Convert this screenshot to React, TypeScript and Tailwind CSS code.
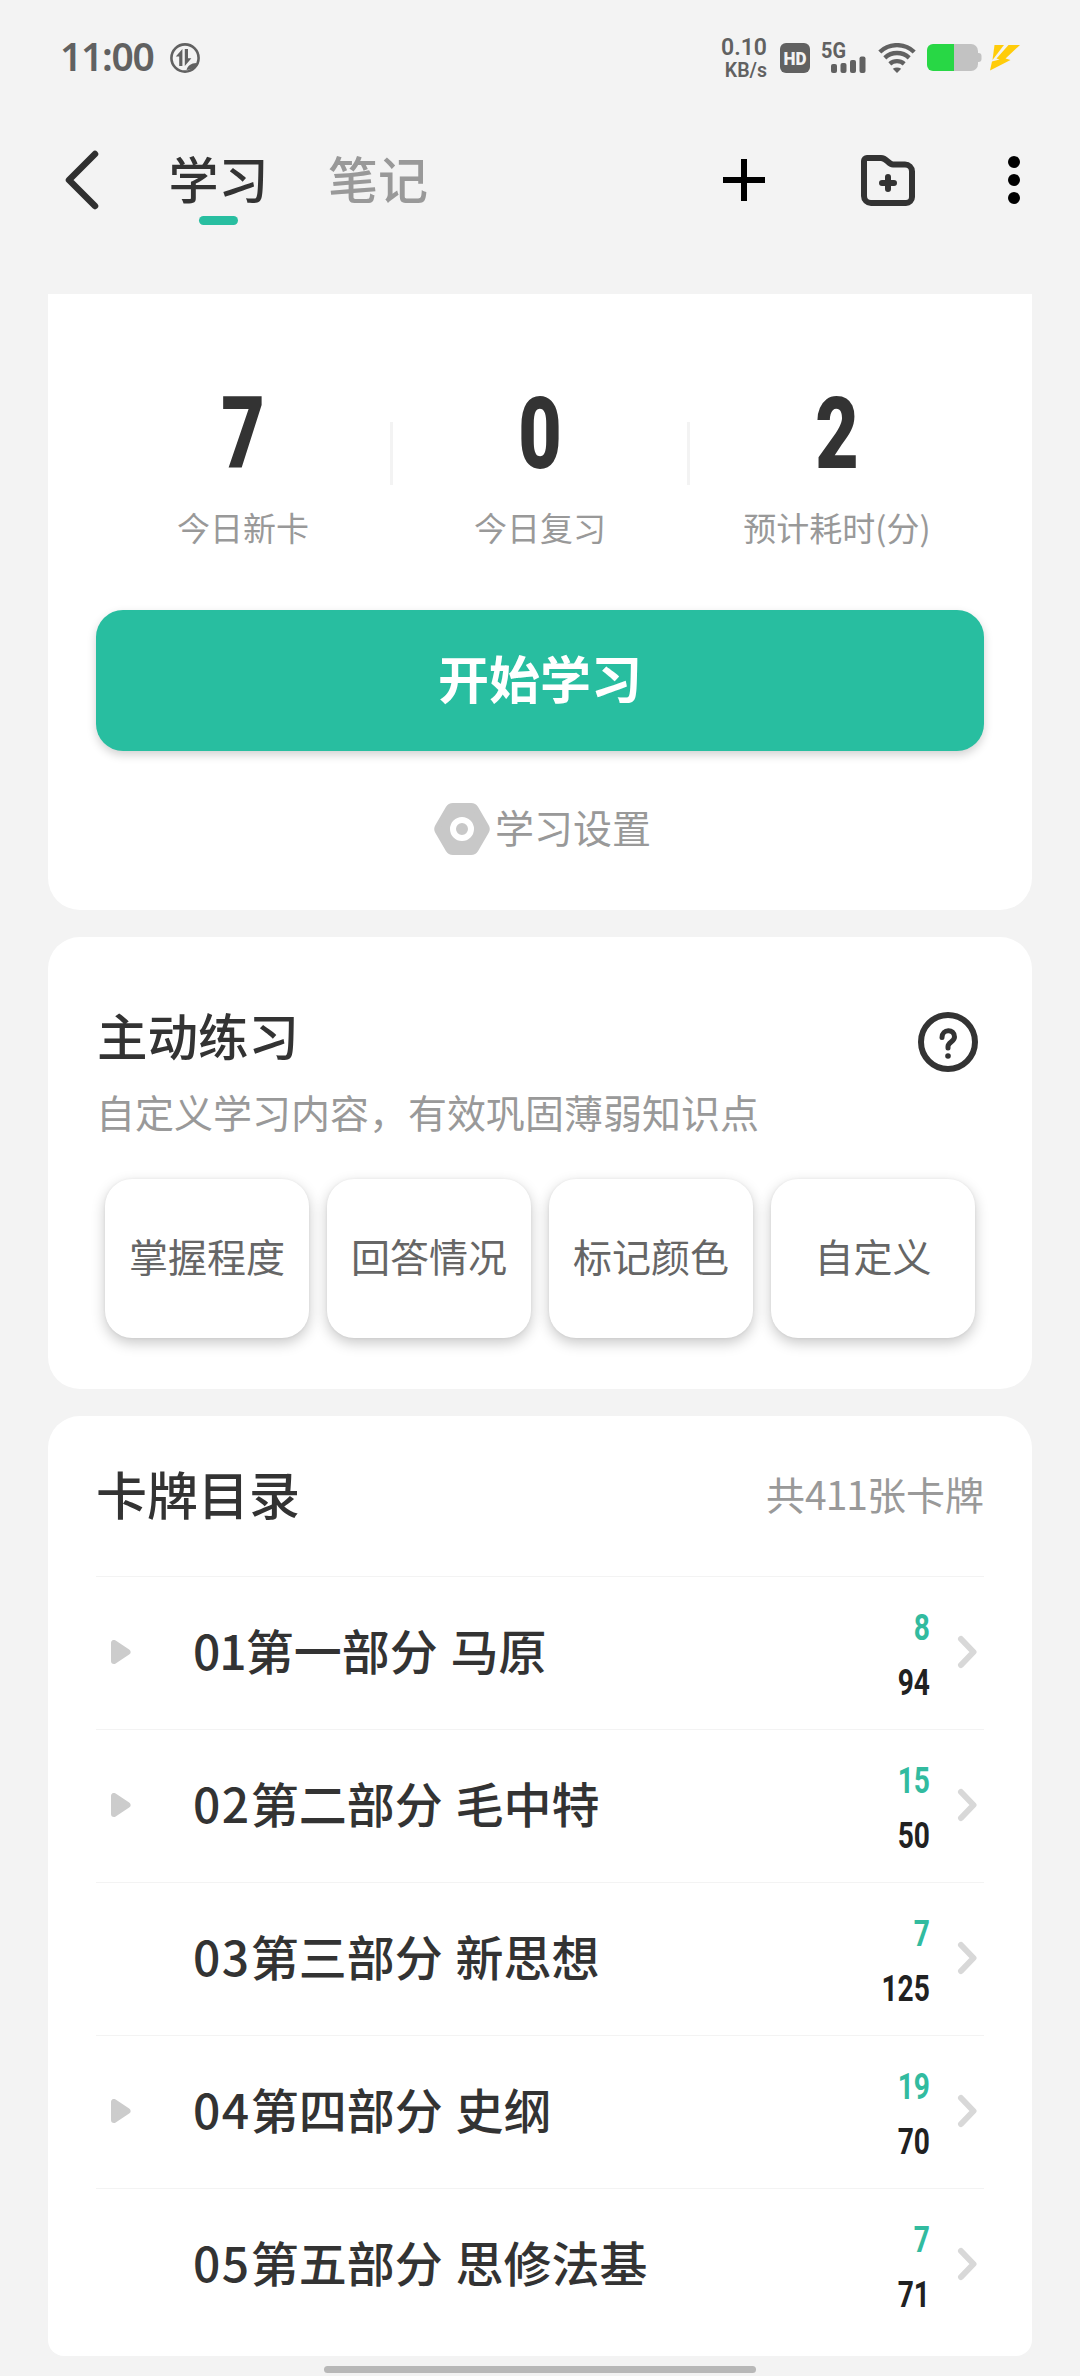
import { Fragment } from "react";

const STATS = [
  { value: "7", label: "今日新卡" },
  { value: "0", label: "今日复习" },
  { value: "2", label: "预计耗时(分)" },
];

const PRACTICE = ["掌握程度", "回答情况", "标记颜色", "自定义"];

const CHAPTERS = [
  { no: "01", title: "第一部分 马原", fresh: 8, total: 94, expandable: true },
  { no: "02", title: "第二部分 毛中特", fresh: 15, total: 50, expandable: true },
  { no: "03", title: "第三部分 新思想", fresh: 7, total: 125, expandable: false },
  { no: "04", title: "第四部分 史纲", fresh: 19, total: 70, expandable: true },
  { no: "05", title: "第五部分 思修法基", fresh: 7, total: 71, expandable: false },
];

function StatusBar() {
  return (
    <div className="flex h-[116px] shrink-0 items-center pl-[60px] pr-[60px] text-[#616161]">
      <span className="w-[96px] pb-[6px] font-['Noto_Sans'] text-[39px] font-semibold leading-none tracking-[-1.3px]">11:00</span>
      <svg className="ml-[14px] h-[30px] w-[30px]" viewBox="0 0 30 30" fill="none">
        <circle cx="15" cy="15" r="13.6" stroke="currentColor" strokeWidth="2.6" />
        <path d="M12.4 6v17H9.2V13.4H5.8zM14.8 6H18v9.3h3.4L14.8 23z" fill="currentColor" />
        <path d="M16.5 27c1-4 4.5-7 10-7-1 4-4.5 7-10 7z" fill="currentColor" />
      </svg>

      <div className="ml-auto flex items-center">
        <div className="flex w-[48px] flex-col items-end font-['Roboto'] font-semibold">
          <span className="text-[23px] leading-[25px]">0.10</span>
          <span className="text-[19.5px] leading-[22px]">KB/s</span>
        </div>
        <svg className="ml-[13px] h-[30px] w-[30px]" viewBox="0 0 30 30">
          <rect width="30" height="30" rx="6" fill="currentColor" />
          <text x="3.5" y="21.7" textLength="23" lengthAdjust="spacingAndGlyphs" fontSize="19" fontWeight="900" fontFamily="Roboto" fill="#f3f3f3">HD</text>
        </svg>
        <svg className="ml-[11px] h-[40px] w-[46px]" viewBox="0 -5 46 40">
          <text x="0" y="15" textLength="25" lengthAdjust="spacingAndGlyphs" fontSize="22" fontWeight="700" fontFamily="Roboto" fill="currentColor">5G</text>
          <rect x="10" y="21" width="6" height="9" rx="2" fill="currentColor" />
          <rect x="19.5" y="20" width="6" height="10" rx="2" fill="currentColor" />
          <rect x="29" y="17" width="6" height="13" rx="2" fill="currentColor" />
          <rect x="38.5" y="13.5" width="6" height="16.5" rx="2" fill="currentColor" />
        </svg>
        <svg className="ml-[11px] h-[30px] w-[38px]" viewBox="0 0 38 30" fill="none" stroke="currentColor" strokeWidth="4.4">
          <path d="M1.800 9a25 25 0 0 1 34.400 0" />
          <path d="M6.800 14.800a18 18 0 0 1 24.400 0" />
          <path d="M11.800 20.800a11 11 0 0 1 14.400 0" />
          <path d="M14.800 25.800q4.200-2.600 8.400 0l-4.200 4.200z" fill="currentColor" stroke="none" />
        </svg>
        <svg className="ml-[11px] h-[28px] w-[55px]" viewBox="0 0 55 28">
          <path d="M27 0h17a7 7 0 0 1 7 7v13a7 7 0 0 1-7 7H27z" fill="#c2c2c2" />
          <path d="M50 9h1.500a3 3 0 0 1 3 3v3a3 3 0 0 1-3 3H50z" fill="#c2c2c2" />
          <path d="M6 0h21v27H6a6 6 0 0 1-6-6V6a6 6 0 0 1 6-6z" fill="#28d745" />
        </svg>
        <svg className="ml-[8px] h-[26px] w-[30px]" viewBox="0 0 30 26" fill="#ffcc0a">
          <path d="M4.500 0H14L2.500 15z" />
          <path d="M18.500 0H30L15.500 13.500l5 1.500L0 25.500 2 16.500l7.500-2-3-1z" />
        </svg>
      </div>
    </div>
  );
}

function TopBar() {
  return (
    <div className="flex h-[178px] shrink-0 items-start pl-[64px] pr-[60px] pt-[32px]">
      <svg className="mt-[2px] h-[60px] w-[36px]" viewBox="0 0 36 60" fill="none">
        <path d="M31 4 5 30l26 26" stroke="#2f2f2f" strokeWidth="6.5" strokeLinecap="round" strokeLinejoin="round" />
      </svg>
      <div className="ml-[68px] flex w-[101px] flex-col items-center">
        <span className="mt-[-3px] whitespace-nowrap text-[50px] font-medium leading-[64px] text-[#333]">学习</span>
        <span className="mt-[7px] h-[9px] w-[39px] rounded-full bg-[#28bea0]" />
      </div>
      <span className="ml-[59px] mt-[-3px] whitespace-nowrap text-[50px] font-medium leading-[64px] text-[#999]">笔记</span>

      <svg className="ml-auto mt-[11px] h-[42px] w-[42px]" viewBox="0 0 42 42">
        <path d="M0 21h42M21 0v42" stroke="#000" strokeWidth="6" />
      </svg>
      <svg className="ml-[96px] mt-[6px] h-[54px] w-[54px]" viewBox="0 0 54 54" fill="none" stroke="#333" strokeWidth="6" strokeLinejoin="round" strokeLinecap="round">
        <path d="M3 7a3 3 0 0 1 3-3h14c6 0 7 6.500 12 6.500h12a7 7 0 0 1 7 7V43a6 6 0 0 1-6 6H10a7 7 0 0 1-7-7z" />
        <path d="M21 29h12M27 23v12" />
      </svg>
      <svg className="ml-[93px] mt-[8px] h-[48px] w-[12px]" viewBox="0 0 12 48">
        <circle cx="6" cy="6" r="6" />
        <circle cx="6" cy="24" r="6" />
        <circle cx="6" cy="42" r="6" />
      </svg>
    </div>
  );
}

function TodayCard() {
  return (
    <section className="h-[616px] shrink-0 rounded-b-[32px] bg-white px-[48px] pt-[93px]">
      <div className="flex items-start">
        {STATS.map((s, i) => (
          <Fragment key={s.label}>
            {i > 0 && <span className="mt-[35px] h-[63px] w-[3px] shrink-0 bg-[#f3f3f3]" />}
            <div className="flex flex-1 flex-col items-center">
              <span className="block scale-x-[0.75] font-['Roboto'] text-[100px] font-black leading-[93px] text-[#333]">
                {s.value}
              </span>
              <span className="mt-[23px] text-[33px] leading-[48px] text-[#999]">{s.label}</span>
            </div>
          </Fragment>
        ))}
      </div>
      <button className="mt-[59px] flex h-[141px] w-full items-center justify-center rounded-[27px] bg-[#28bea0] pb-[7px] text-[51px] font-bold text-white shadow-[0_4px_10px_rgba(0,0,0,0.18)]">
        开始学习
      </button>
      <div className="mt-[46px] flex h-[64px] items-center justify-center pl-[4px]">
        <svg className="h-[54px] w-[58px]" viewBox="0 0 58 54">
          <path
            d="M20 4h18q3 0 4.500 2.600L53 24.500q1.500 2.500 0 5L42.500 47.400Q41 50 38 50H20q-3 0-4.500-2.600L5 29.500q-1.500-2.500 0-5L15.500 6.600Q17 4 20 4z"
            fill="#c8c8c8"
            stroke="#c8c8c8"
            strokeWidth="6"
            strokeLinejoin="round"
          />
          <circle cx="29" cy="27" r="9" fill="#c8c8c8" stroke="#fff" strokeWidth="6" />
        </svg>
        <span className="ml-[4px] pb-[6px] text-[39px] leading-[58px] text-[#999]">学习设置</span>
      </div>
    </section>
  );
}

function PracticeCard() {
  return (
    <section className="mt-[27px] h-[452px] shrink-0 rounded-[32px] bg-white px-[48px] pt-[67px]">
      <div className="flex justify-between">
        <h2 className="pl-[1px] text-[50.5px] font-medium leading-[60px] text-[#333]">主动练习</h2>
        <svg className="mr-[6px] mt-[8px] h-[60px] w-[60px]" viewBox="0 0 60 60" fill="none" stroke="#333">
          <circle cx="30" cy="30" r="27" strokeWidth="6" />
          <path d="M24 25.500c0-9 12.500-9 12.500-.5 0 4.500-6.500 5.500-6.500 9.500V36" strokeWidth="5" strokeLinecap="round" />
          <circle cx="30" cy="44" r="2.8" fill="#333" stroke="none" />
        </svg>
      </div>
      <p className="mt-[14px] text-[39px] leading-[50px] text-[#999]">自定义学习内容，有效巩固薄弱知识点</p>
      <div className="mt-[43px] grid grid-cols-4 gap-[18px] px-[9px]">
        {PRACTICE.map((p) => (
          <button
            key={p}
            className="h-[159px] rounded-[27px] bg-white pb-[6px] text-[39px] text-[#666] shadow-[0_5px_14px_rgba(0,0,0,0.22),0_0_3px_rgba(0,0,0,0.06)]"
          >
            {p}
          </button>
        ))}
      </div>
    </section>
  );
}

function CatalogCard() {
  return (
    <section className="mt-[27px] h-[940px] shrink-0 rounded-t-[32px] rounded-b-[16px] bg-white px-[48px]">
      <div className="flex h-[160px] items-center justify-between pb-[6px]">
        <h2 className="text-[51px] font-medium text-[#333]">卡牌目录</h2>
        <span className="text-[39px] text-[#999]">
          共<span className="tracking-[-1px]">411</span>张卡牌
        </span>
      </div>
      {CHAPTERS.map((c) => (
        <div key={c.no} className="flex h-[153px] items-center border-t border-[#f3f3f3]">
          <span className="w-[97px] pb-[3px] pl-[15px]">
            {c.expandable && (
              <svg className="h-[24px] w-[20px]" viewBox="0 0 20 24">
                <path d="M3 3v18l13.500-9z" fill="#ccc" stroke="#ccc" strokeWidth="6" strokeLinejoin="round" />
              </svg>
            )}
          </span>
          <span className="pb-[8px] text-[48px] font-medium text-[#333] [word-spacing:2px]">
            <span className={c.no === "01" ? "tracking-[-1px]" : "tracking-[1.5px]"}>{c.no}</span>
            {c.title}
          </span>
          <span className="ml-auto flex origin-right scale-x-[0.77] flex-col items-end pt-[4px] font-['Roboto'] text-[36.5px] font-bold leading-[55px]">
            <span className="text-[#32bb9f]">{c.fresh}</span>
            <span className="text-[#212121]">{c.total}</span>
          </span>
          <svg className="mb-[2px] ml-[27px] mr-[7px] h-[34px] w-[20px]" viewBox="0 0 20 34" fill="none">
            <path d="M4 4l12.500 13L4 30" stroke="#d8d8d8" strokeWidth="6" strokeLinecap="round" strokeLinejoin="round" />
          </svg>
        </div>
      ))}
    </section>
  );
}

export default function App() {
  return (
    <div className="flex h-[2376px] w-[1080px] flex-col overflow-hidden bg-[#f3f3f3] font-['Noto_Sans_CJK_SC',sans-serif]">
      <StatusBar />
      <TopBar />
      <main className="flex flex-col px-[48px]">
        <TodayCard />
        <PracticeCard />
        <CatalogCard />
      </main>
      <div className="mx-auto mt-[10px] h-[7px] w-[432px] shrink-0 rounded-full bg-[#b8b8b8]" />
    </div>
  );
}
